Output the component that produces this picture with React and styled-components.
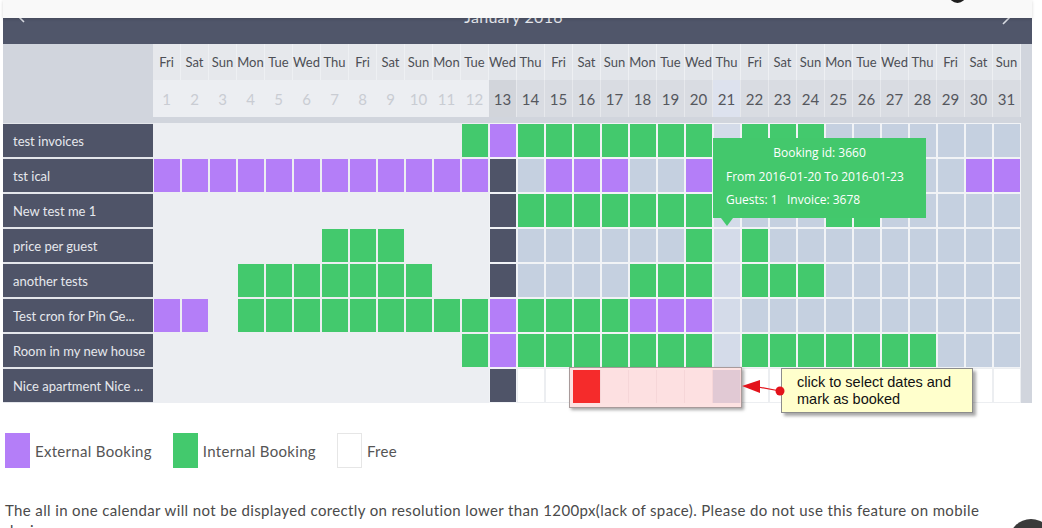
import React from 'react';
import styled, { createGlobalStyle } from 'styled-components';

const GlobalStyle = createGlobalStyle`
  html, body { margin: 0; padding: 0; background: #fff; }
  body { font-family: Lato, "Open Sans", sans-serif; overflow: hidden; }
  * { box-sizing: border-box; }
`;

const DAYS = ['Fri', 'Sat', 'Sun', 'Mon', 'Tue', 'Wed', 'Thu'];
const TODAY = 13;
const HIGHLIGHT = 21;

const ROWS = [
  { name: 'test invoices', cells: '...........GPGGGGGGG.GGG.......' },
  { name: 'tst ical', cells: 'PPPPPPPPPPPPD.PPP..P.........PPP' },
  { name: 'New test me 1', cells: '............DGGGGGGG....GG.....' },
  { name: 'price per guest', cells: '......GGG...D......G.G.........' },
  { name: 'another tests', cells: '...GGGGGGG..D....GGG.GGG.......' },
  { name: 'Test cron for Pin Ge...', cells: 'PP.GGGGGGGGGPGGGGPPP...........' },
  { name: 'Room in my new house', cells: '...........GPGGGGGGG.GGGGGGG...' },
  { name: 'Nice apartment Nice ...', cells: '............DWWWWWWWWWWWWWWWWWW' },
];

const COLORS = {
  P: '#b47ef8',
  G: '#43c96d',
  D: '#4f5468',
  W: '#ffffff',
};

function cellStyle(ch, day) {
  const past = day < TODAY;
  if (ch === '.') {
    if (past) return { bg: '#eceef2', line: '#eceef2' };
    return { bg: day === HIGHLIGHT ? '#d4dbe9' : '#c5d0e0', line: '#f1f3f6' };
  }
  if (ch === 'W') return { bg: '#ffffff', line: '#eceef1' };
  return { bg: COLORS[ch], line: past ? '#eceef2' : '#f1f3f6' };
}

const Page = styled.div`
  position: relative;
  width: 1042px;
  height: 528px;
  overflow: hidden;
`;

const TopBar = styled.div`
  position: absolute;
  left: 3px;
  top: 0;
  width: 1029px;
  height: 18px;
  background: #f9f9f9;
  box-shadow: 0 1px 3px rgba(0, 0, 0, 0.16);
  z-index: 5;
`;

const Avatar = styled.div`
  position: absolute;
  left: 946px;
  top: -14px;
  width: 17px;
  height: 17px;
  border-radius: 50%;
  background: #1f1f1f;
`;

const Calendar = styled.div`
  margin-left: 3px;
  width: 1029px;
  background: #d1d5dd;
`;

const MonthBar = styled.div`
  height: 44px;
  background: #50566a;
  display: flex;
  align-items: flex-start;
  justify-content: space-between;
  padding: 8px 20px 0 12px;
  color: #e3e5ea;
`;

const MonthTitle = styled.div`
  font-size: 16px;
  line-height: 18px;
  letter-spacing: 0.3px;
`;

const Chevron = styled.svg`
  width: 12px;
  height: 16px;
  margin-top: ${(p) => p.$top}px;
`;

const Header = styled.div`
  display: flex;
  height: 79px;
`;

const Corner = styled.div`
  width: 150px;
  flex-shrink: 0;
`;

const HeadColumns = styled.div`
  display: flex;
  flex-direction: column;
`;

const HeadLine = styled.div`
  display: flex;
`;

const DayName = styled.div`
  width: 28px;
  height: 36px;
  display: flex;
  align-items: center;
  justify-content: center;
  font-size: 13px;
  color: #4d4f55;
  background: ${(p) => (p.$past ? '#e6e8ec' : '#e2e5ea')};
  border-right: 1px solid #eef0f3;
`;

const DateCell = styled.div`
  width: 28px;
  height: 37px;
  display: flex;
  align-items: center;
  justify-content: center;
  font-size: 15px;
  color: ${(p) => (p.$past ? '#c9ccd3' : '#55575d')};
  background: ${(p) => p.$bg};
  border-right: 1px solid ${(p) => (p.$past ? '#eceef2' : '#e6e8ec')};
`;

const Row = styled.div`
  display: flex;
  height: 35px;
`;

const Label = styled.div`
  width: 150px;
  flex-shrink: 0;
  background: #4f5468;
  border-top: 1px solid #e4e6eb;
  border-bottom: 1px solid #e4e6eb;
  color: #e6e8ed;
  font-size: 13px;
  display: flex;
  align-items: center;
  padding-left: 10px;
  white-space: nowrap;
`;

const Cell = styled.div`
  width: 28px;
  height: 35px;
  background: ${(p) => p.$bg};
  border: 1px solid ${(p) => p.$line};
`;

const Tooltip = styled.div`
  position: absolute;
  left: 713px;
  top: 138px;
  width: 213px;
  height: 80px;
  background: #43c86c;
  color: #fff;
  font-family: "Open Sans", Lato, sans-serif;
  font-size: 12px;
  padding: 3px 13px 0;
  z-index: 3;
  &::after {
    content: '';
    position: absolute;
    left: 8px;
    bottom: -8px;
    border-left: 6px solid transparent;
    border-right: 6px solid transparent;
    border-top: 8px solid #43c86c;
  }
`;

const TipLine = styled.div`
  line-height: 23.5px;
  text-align: ${(p) => (p.$center ? 'center' : 'left')};
  white-space: pre;
`;

const Selection = styled.div`
  position: absolute;
  left: 569px;
  top: 367px;
  width: 173px;
  height: 41px;
  background: #fde2e2;
  border: 1px solid #a89a9a;
  box-shadow: 2px 2px 3px rgba(0, 0, 0, 0.35);
  display: flex;
  padding: 2px 0 0 3px;
  z-index: 3;
`;

const SelCell = styled.div`
  width: 28px;
  height: 33px;
  background: ${(p) => p.$bg};
  border-right: 1px solid #f6d6d8;
`;

const Arrow = styled.svg`
  position: absolute;
  left: 738px;
  top: 378px;
  width: 48px;
  height: 20px;
  z-index: 6;
`;

const Callout = styled.div`
  position: absolute;
  left: 781px;
  top: 368px;
  width: 192px;
  height: 45px;
  background: #ffffcc;
  border: 1px solid #8c8c8c;
  box-shadow: 3px 3px 3px rgba(0, 0, 0, 0.35);
  font-family: "Liberation Sans", Arial, sans-serif;
  font-size: 14.5px;
  line-height: 17px;
  color: #111;
  padding: 5px 6px 0 15px;
  white-space: nowrap;
  z-index: 4;
`;

const Legend = styled.div`
  display: flex;
  gap: 21px;
  margin: 30px 0 0 5px;
`;

const LegendItem = styled.div`
  display: flex;
  align-items: center;
  gap: 5px;
  font-size: 15px;
  letter-spacing: 0.3px;
  color: #555;
`;

const Swatch = styled.div`
  width: 25px;
  height: 35px;
  background: ${(p) => p.$color};
  border: ${(p) => (p.$outline ? '1px solid #e6e6e6' : 'none')};
`;

const Note = styled.p`
  margin: 32px 0 0 5px;
  width: 1000px;
  font-size: 15px;
  line-height: 20px;
  letter-spacing: 0.37px;
  color: #4a4a4a;
`;

const TopButton = styled.div`
  position: absolute;
  left: 1009px;
  top: 519px;
  width: 44px;
  height: 44px;
  border-radius: 50%;
  background: #3a3a3a;
`;

export default function App() {
  const days = Array.from({ length: 31 }, (_, i) => i + 1);
  return (
    <Page>
      <GlobalStyle />
      <TopBar>
        <Avatar />
      </TopBar>
      <Calendar>
        <MonthBar>
          <Chevron $top={0} viewBox="0 0 12 16">
            <path d="M9 2 L3 8 L9 14" fill="none" stroke="#d9dce3" strokeWidth="1.6" />
          </Chevron>
          <MonthTitle>January 2016</MonthTitle>
          <Chevron $top={2} viewBox="0 0 12 16">
            <path d="M3 2 L9 8 L3 14" fill="none" stroke="#d9dce3" strokeWidth="1.6" />
          </Chevron>
        </MonthBar>
        <Header>
          <Corner />
          <HeadColumns>
            <HeadLine>
              {days.map((d) => (
                <DayName key={d} $past={d < TODAY}>
                  {DAYS[(d - 1) % 7]}
                </DayName>
              ))}
            </HeadLine>
            <HeadLine>
              {days.map((d) => {
                let bg = '#d9dce2';
                if (d < TODAY) bg = '#eceef2';
                else if (d === TODAY) bg = '#d2d5db';
                else if (d === HIGHLIGHT) bg = '#dde2ee';
                return (
                  <DateCell key={d} $past={d < TODAY} $bg={bg}>
                    {d}
                  </DateCell>
                );
              })}
            </HeadLine>
          </HeadColumns>
        </Header>
        {ROWS.map((r) => (
          <Row key={r.name}>
            <Label>{r.name}</Label>
            {days.map((d) => {
              const s = cellStyle(r.cells[d - 1] || '.', d);
              return <Cell key={d} $bg={s.bg} $line={s.line} />;
            })}
          </Row>
        ))}
      </Calendar>

      <Tooltip>
        <TipLine $center>Booking id: 3660</TipLine>
        <TipLine>From 2016-01-20 To 2016-01-23</TipLine>
        <TipLine>{'Guests: 1   Invoice: 3678'}</TipLine>
      </Tooltip>

      <Selection>
        <SelCell $bg="#f52b2b" />
        <SelCell $bg="#fde0e1" />
        <SelCell $bg="#fde0e1" />
        <SelCell $bg="#fde0e1" />
        <SelCell $bg="#fde0e1" />
        <SelCell $bg="#e1c9d4" />
      </Selection>

      <Arrow viewBox="0 0 48 20">
        <line x1="20" y1="9" x2="42" y2="13" stroke="#e3131b" strokeWidth="1.2" />
        <polygon points="4,8 22,2 22,15" fill="#e3131b" />
        <circle cx="42" cy="13" r="4.5" fill="#e3131b" />
      </Arrow>

      <Callout>
        click to select dates and
        <br />
        mark as booked
      </Callout>

      <Legend>
        <LegendItem>
          <Swatch $color="#b47ef8" />
          External Booking
        </LegendItem>
        <LegendItem>
          <Swatch $color="#43c96d" />
          Internal Booking
        </LegendItem>
        <LegendItem>
          <Swatch $color="#ffffff" $outline />
          Free
        </LegendItem>
      </Legend>

      <Note>
        The all in one calendar will not be displayed corectly on resolution lower than 1200px(lack of space). Please do not use this feature on mobile devices.
      </Note>

      <TopButton />
    </Page>
  );
}
